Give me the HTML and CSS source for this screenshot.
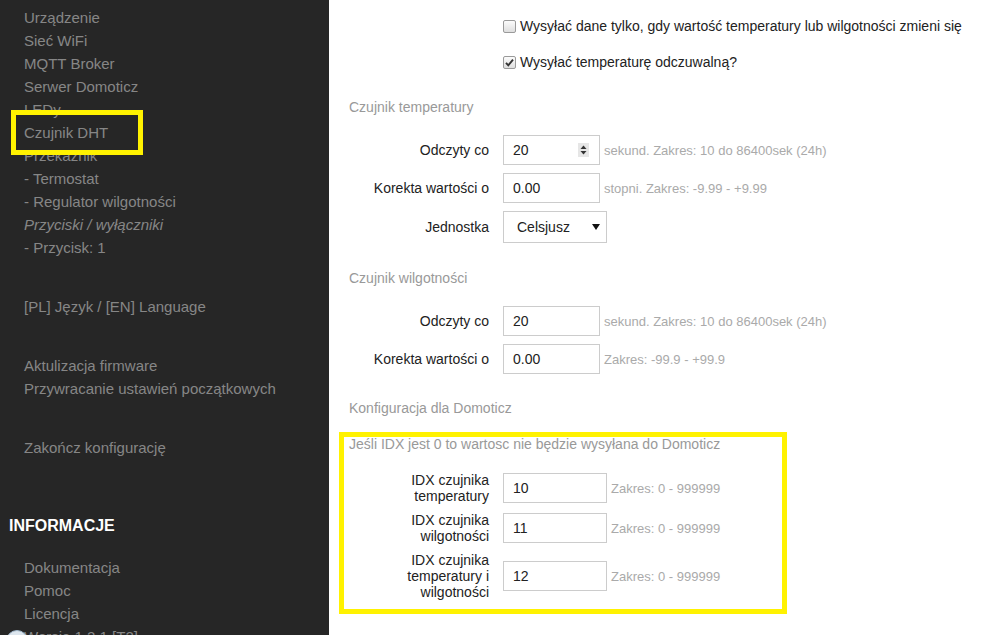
FILE: index.html
```html
<!DOCTYPE html>
<html lang="pl">
<head>
    <meta charset="UTF-8">
    <meta name="viewport" content="width=device-width, initial-scale=1.0">
    <title>Czujnik DHT</title>
    <link rel="stylesheet" href="styles.css">
</head>
<body>
    <div class="layout">
        <nav class="sidebar">
            <ul class="menu">
                <li>Urządzenie</li>
                <li>Sieć WiFi</li>
                <li>MQTT Broker</li>
                <li>Serwer Domoticz</li>
                <li>LEDy</li>
                <li>Czujnik DHT</li>
                <li>Przekaźnik</li>
                <li>- Termostat</li>
                <li>- Regulator wilgotności</li>
                <li class="menu-group">Przyciski / wyłączniki</li>
                <li>- Przycisk: 1</li>
            </ul>
            <ul class="menu">
                <li>[PL] Język / [EN] Language</li>
            </ul>
            <ul class="menu">
                <li>Aktulizacja firmware</li>
                <li>Przywracanie ustawień początkowych</li>
            </ul>
            <ul class="menu">
                <li>Zakończ konfigurację</li>
            </ul>
            <h3 class="menu-title">INFORMACJE</h3>
            <ul class="menu">
                <li>Dokumentacja</li>
                <li>Pomoc</li>
                <li>Licencja</li>
                <li>Wersja 1.2.1 [T2]</li>
            </ul>

            <!-- annotation around the active item -->
            <span class="mark mark-menu"></span>
            <span class="help-bubble"></span>
        </nav>

        <main class="content">
            <div class="field field-cut">
                <label class="field-label"></label>
                <input class="text-input" type="text" value="">
            </div>

            <div class="check-row">
                <span class="checkbox"></span>
                Wysyłać dane tylko, gdy wartość temperatury lub wilgotności zmieni się
            </div>
            <div class="check-row">
                <span class="checkbox">
                    <svg width="11" height="11" viewBox="0 0 11 11"><path d="M2 5.8 L4.3 8.3 L9 2.6" fill="none" stroke="#333" stroke-width="1.9"/></svg>
                </span>
                Wysyłać temperaturę odczuwalną?
            </div>

            <section class="group">
                <h4 class="section-title">Czujnik temperatury</h4>
                <div class="fields">
                    <div class="field">
                        <label class="field-label">Odczyty co</label>
                        <div class="number-box">
                            <input type="text" value="20">
                            <svg class="spinner" width="11" height="14" viewBox="0 0 11 14">
                                <rect width="11" height="14" fill="#e6e6e6"/>
                                <polygon points="2.5,6 5.5,2.5 8.5,6" fill="#333"/>
                                <polygon points="2.5,8 5.5,11.5 8.5,8" fill="#333"/>
                            </svg>
                        </div>
                        <span class="hint">sekund. Zakres: 10 do 86400sek (24h)</span>
                    </div>
                    <div class="field">
                        <label class="field-label">Korekta wartości o</label>
                        <input class="text-input" type="text" value="0.00">
                        <span class="hint">stopni. Zakres: -9.99 - +9.99</span>
                    </div>
                    <div class="field">
                        <label class="field-label">Jednostka</label>
                        <div class="select-box">
                            <select>
                                <option>Celsjusz</option>
                                <option>Fahrenheit</option>
                            </select>
                            <svg width="8" height="6" viewBox="0 0 8 6"><polygon points="0,0 8,0 4,6" fill="#111"/></svg>
                        </div>
                    </div>
                </div>
            </section>

            <section class="group">
                <h4 class="section-title">Czujnik wilgotności</h4>
                <div class="fields">
                    <div class="field">
                        <label class="field-label">Odczyty co</label>
                        <input class="text-input" type="text" value="20">
                        <span class="hint">sekund. Zakres: 10 do 86400sek (24h)</span>
                    </div>
                    <div class="field">
                        <label class="field-label">Korekta wartości o</label>
                        <input class="text-input" type="text" value="0.00">
                        <span class="hint">Zakres: -99.9 - +99.9</span>
                    </div>
                </div>
            </section>

            <section class="group group-domoticz">
                <h4 class="section-title">Konfiguracja dla Domoticz</h4>
                <div class="highlight">
                    <p class="note">Jeśli IDX jest 0 to wartosc nie będzie wysyłana do Domoticz</p>
                    <div class="fields">
                        <div class="field">
                            <label class="field-label">IDX czujnika temperatury</label>
                            <input class="text-input wide" type="text" value="10">
                            <span class="hint">Zakres: 0 - 999999</span>
                        </div>
                        <div class="field">
                            <label class="field-label">IDX czujnika wilgotności</label>
                            <input class="text-input wide" type="text" value="11">
                            <span class="hint">Zakres: 0 - 999999</span>
                        </div>
                        <div class="field">
                            <label class="field-label">IDX czujnika temperatury i wilgotności</label>
                            <input class="text-input wide" type="text" value="12">
                            <span class="hint">Zakres: 0 - 999999</span>
                        </div>
                    </div>
                </div>
            </section>
        </main>
    </div>
</body>
</html>
```

FILE: styles.css
```css
html, body {
    margin: 0;
    height: 100%;
    overflow: hidden;
}

body {
    font-family: "Liberation Sans", Arial, sans-serif;
    font-size: 14px;
    color: #333;
    background-color: #fff;
}

.layout {
    display: grid;
    grid-template-columns: 329px 1fr;
    height: 635px;
}

/* sidebar */

.sidebar {
    position: relative;
    background-color: #262626;
    padding-top: 6px;
    overflow: hidden;
}

.menu {
    list-style: none;
    margin: 0 0 36px;
    padding: 0 0 0 24px;
}

.menu li {
    font-size: 15px;
    line-height: 23px;
    color: #868686;
    white-space: nowrap;
}

.menu li.menu-group {
    font-style: italic;
}

.menu-title {
    margin: 55px 0 19px 9px;
    font-size: 16px;
    line-height: 23px;
    font-weight: bold;
    color: #fff;
}

.mark {
    position: absolute;
    border: 5px solid #fff200;
    box-sizing: border-box;
}

.mark-menu {
    left: 11px;
    top: 110px;
    width: 132px;
    height: 45px;
}

.help-bubble {
    position: absolute;
    left: 6px;
    top: 630px;
    width: 20px;
    height: 20px;
    border-radius: 50%;
    background-color: #dde6ee;
    border: 1px solid #9fb6c9;
}

/* form */

.content {
    padding: 0 20px;
}

.field {
    display: flex;
    align-items: center;
}

.field-cut {
    margin-top: -30px;
}

.field-label {
    width: 140px;
    margin-right: 14px;
    flex-shrink: 0;
    text-align: right;
    line-height: 16px;
    color: #222;
}

.text-input {
    width: 97px;
    height: 30px;
    box-sizing: border-box;
    padding: 0 9px;
    border: 1px solid #ccc;
    font-family: inherit;
    font-size: 14px;
    color: #222;
    outline: none;
}

.text-input.wide {
    width: 104px;
}

.number-box {
    display: flex;
    align-items: center;
    width: 97px;
    height: 30px;
    box-sizing: border-box;
    border: 1px solid #ccc;
    padding-right: 10px;
}

.number-box input {
    flex: 1;
    min-width: 0;
    border: 0;
    padding: 0 0 0 9px;
    font-family: inherit;
    font-size: 14px;
    color: #222;
    outline: none;
}

.select-box {
    display: flex;
    align-items: center;
    width: 104px;
    height: 32px;
    box-sizing: border-box;
    border: 1px solid #ccc;
    padding-right: 6px;
}

.select-box select {
    flex: 1;
    min-width: 0;
    appearance: none;
    border: 0;
    background: transparent;
    padding: 0 0 0 13px;
    font-family: inherit;
    font-size: 14px;
    color: #222;
    outline: none;
}

.hint {
    margin-left: 4px;
    font-size: 13px;
    color: #aaa;
    white-space: nowrap;
}

.check-row {
    display: flex;
    align-items: center;
    margin-top: 16px;
    padding-left: 154px;
    line-height: 20px;
    color: #222;
}

.checkbox {
    display: flex;
    align-items: center;
    justify-content: center;
    width: 13px;
    height: 13px;
    box-sizing: border-box;
    margin-right: 4px;
    border: 1px solid #9a9a9a;
    border-radius: 2px;
    background: linear-gradient(#fcfcfc, #dedede);
}

.group {
    margin-top: 27px;
}

.group-domoticz {
    margin-top: 26px;
}

.section-title {
    margin: 0 0 20px;
    font-size: 14px;
    font-weight: normal;
    line-height: 16px;
    color: #999;
}

.group-domoticz .section-title {
    margin-bottom: 16px;
}

.fields {
    display: flex;
    flex-direction: column;
    gap: 8px;
}

.highlight {
    width: 448px;
    box-sizing: border-box;
    margin-left: -10px;
    padding: 0 0 9px 5px;
    border: 5px solid #fff200;
}

.note {
    margin: 0 0 21px;
    line-height: 14px;
    color: #999;
}
```
